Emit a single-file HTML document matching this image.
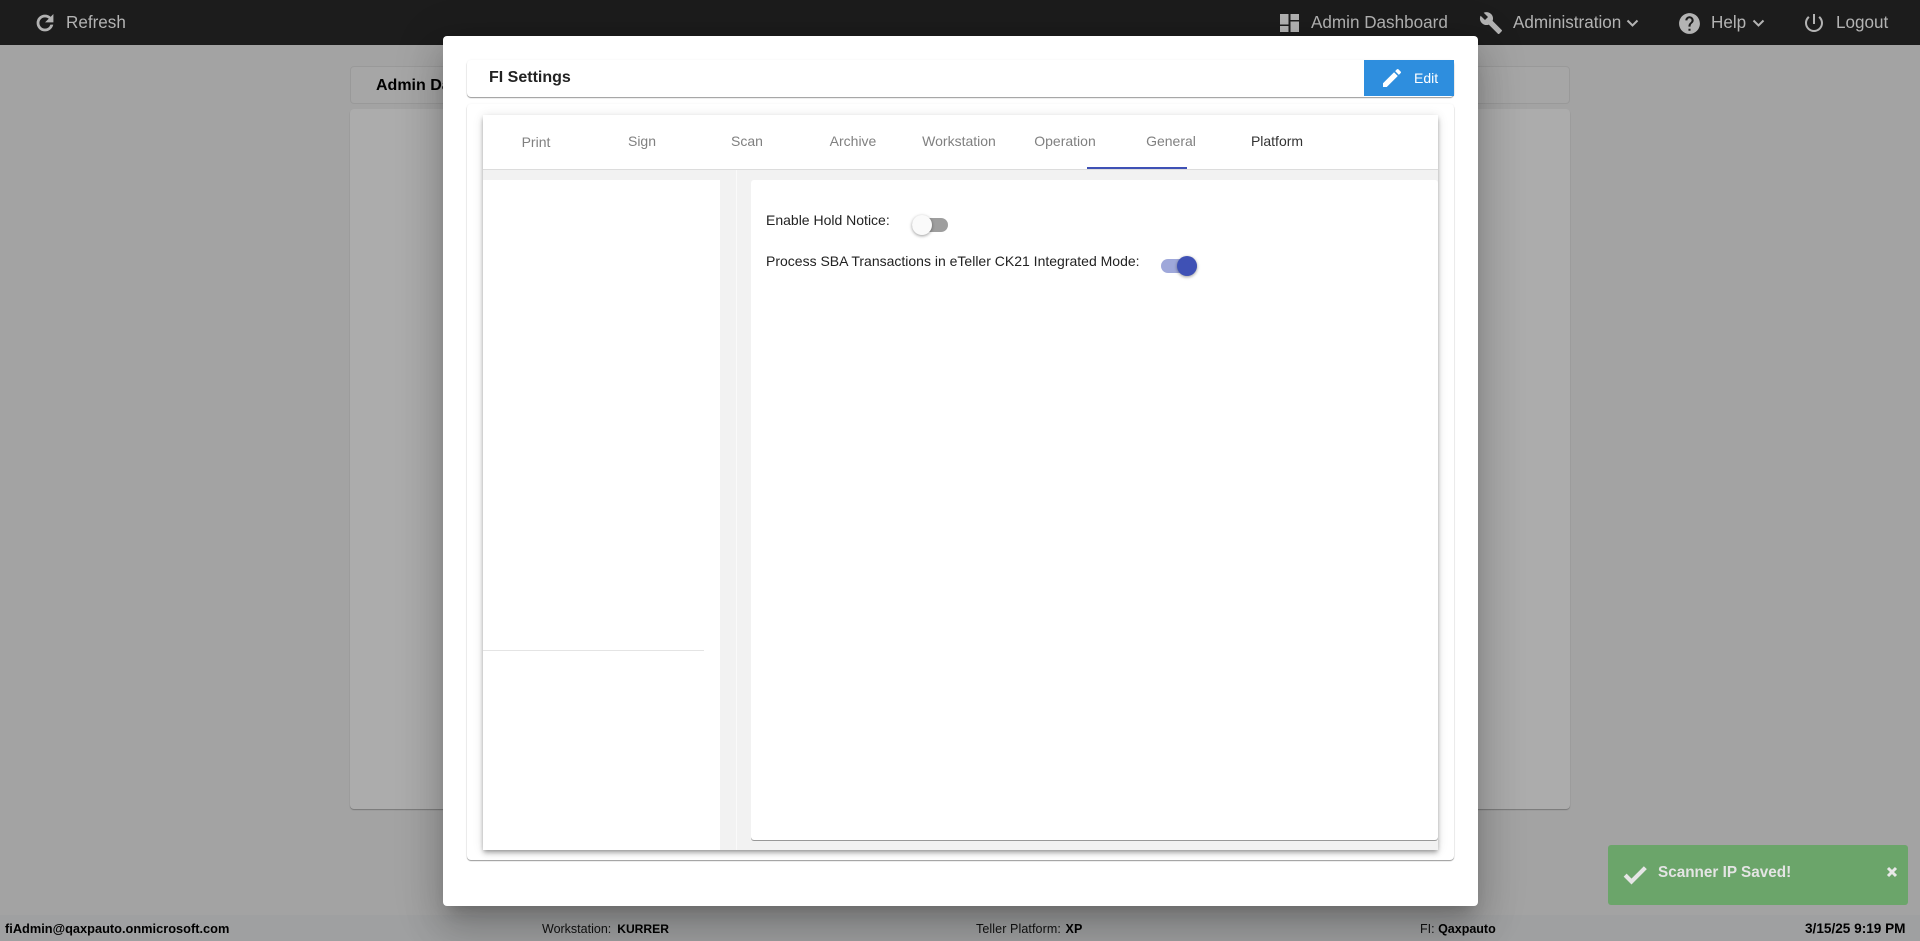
<!DOCTYPE html>
<html><head><meta charset="utf-8"><title>FI Settings</title>
<style>
html,body{margin:0;padding:0;width:1920px;height:941px;overflow:hidden;background:#a3a3a3;font-family:"Liberation Sans",sans-serif}
div,span,svg{position:absolute;box-sizing:border-box}
.t{white-space:nowrap;line-height:20px}
.h{color:#b3b3b3;font-size:17.1px;top:13px}
svg.i{fill:#b3b3b3}
.tab{top:131px;width:106px;text-align:center;font-size:14px;line-height:20px;color:#808080}
.f{top:921px;font-size:12.5px;line-height:16px;color:#111;white-space:nowrap}
.f b{font-weight:700;color:#000}
</style></head><body>
<!-- page behind backdrop -->
<div style="left:350px;top:66px;width:1220px;height:38px;background:#a6a6a6;border:1px solid #999;border-radius:4px"></div>
<div class="t" style="left:376px;top:76px;font-size:16px;font-weight:700;color:#000">Admin Dashboard</div>
<div style="left:350px;top:109px;width:1220px;height:700px;background:#acacac;border-radius:4px;box-shadow:0 1px 1px #777"></div>
<!-- footer -->
<div style="left:0;top:915px;width:1920px;height:26px;background:#9fa0a1"></div>
<div class="f" style="left:5px;font-size:12.8px"><b>fiAdmin@qaxpauto.onmicrosoft.com</b></div>
<div class="f" style="left:542px;word-spacing:1.5px">Workstation: <b style="font-size:12.1px;margin-left:1px">KURRER</b></div>
<div class="f" style="left:976px;letter-spacing:.1px">Teller Platform: <b style="margin-left:1px">XP</b></div>
<div class="f" style="left:1420px">FI: <b>Qaxpauto</b></div>
<div class="f" style="left:1805px;font-size:13.6px"><b>3/15/25 9:19 PM</b></div>
<!-- toast -->
<div style="left:1608px;top:845px;width:300px;height:60px;background:#6ba56a;border-radius:3px"></div>
<svg style="left:1621px;top:861px" width="28" height="28" viewBox="0 0 24 24"><path d="M9 16.17L4.83 12l-1.42 1.41L9 19 21 7l-1.41-1.41z" fill="#e6e6e6" stroke="#e6e6e6" stroke-width="1.6"/></svg>
<div class="t" style="left:1658px;top:863px;font-size:15.3px;font-weight:700;color:#e4e4e4">Scanner IP Saved!</div>
<svg style="left:1886px;top:866px" width="12" height="12" viewBox="0 0 12 12"><path d="M2 2l8 8M10 2l-8 8" stroke="#e8e8e8" stroke-width="3"/></svg>
<!-- header -->
<div style="left:0;top:0;width:1920px;height:45px;background:#1c1c1c"></div>
<svg class="i" style="left:33px;top:11px" width="24" height="24" viewBox="0 0 24 24"><path d="M17.65 6.35C16.2 4.9 14.21 4 12 4c-4.42 0-7.99 3.58-7.99 8s3.57 8 7.99 8c3.73 0 6.84-2.55 7.73-6h-2.08c-.82 2.33-3.04 4-5.65 4-3.31 0-6-2.69-6-6s2.69-6 6-6c1.66 0 3.14.69 4.22 1.78L13 11h7V4l-2.35 2.35z" stroke="#b3b3b3" stroke-width=".8"/></svg>
<div class="t h" style="left:66px">Refresh</div>
<svg class="i" style="left:1280px;top:14px" width="19" height="18" viewBox="0 0 19 18"><path d="M0 0h8.5v10.5H0zM0 12h8.5v6H0zM10.5 0H19v6h-8.5zM10.5 7.5H19V18h-8.5z"/></svg>
<div class="t h" style="left:1311px">Admin Dashboard</div>
<svg class="i" style="left:1479px;top:11px" width="24" height="24" viewBox="0 0 24 24"><path d="M22.7 19l-9.1-9.1c.9-2.3.4-5-1.5-6.9-2-2-5-2.4-7.4-1.3L9 6 6 9 1.6 4.7C.4 7.1.9 10.1 2.9 12.1c1.9 1.9 4.6 2.4 6.9 1.5l9.1 9.1c.4.4 1 .4 1.4 0l2.3-2.3c.5-.4.5-1.1.1-1.4z"/></svg>
<div class="t h" style="left:1513px">Administration</div>
<svg style="left:1626px;top:19px" width="13" height="9" viewBox="0 0 13 9"><path d="M1.5 1.5l5 5 5-5" fill="none" stroke="#b3b3b3" stroke-width="2"/></svg>
<svg class="i" style="left:1677px;top:11px" width="25" height="25" viewBox="0 0 24 24"><path d="M12 2C6.48 2 2 6.48 2 12s4.48 10 10 10 10-4.48 10-10S17.52 2 12 2zm1 17h-2v-2h2v2zm2.07-7.75l-.9.92C13.45 12.9 13 13.5 13 15h-2v-.5c0-1.1.45-2.1 1.17-2.83l1.24-1.26c.37-.36.59-.86.59-1.41 0-1.1-.9-2-2-2s-2 .9-2 2H8c0-2.21 1.79-4 4-4s4 1.79 4 4c0 .88-.36 1.68-.93 2.25z"/></svg>
<div class="t h" style="left:1711px">Help</div>
<svg style="left:1752px;top:19px" width="13" height="9" viewBox="0 0 13 9"><path d="M1.5 1.5l5 5 5-5" fill="none" stroke="#b3b3b3" stroke-width="2"/></svg>
<svg class="i" style="left:1802px;top:11px" width="24" height="24" viewBox="0 0 24 24"><path d="M13 3h-2v10h2V3zm4.83 2.17l-1.42 1.42C17.99 7.86 19 9.81 19 12c0 3.87-3.13 7-7 7s-7-3.13-7-7c0-2.19 1.01-4.14 2.58-5.42L6.17 5.17C4.23 6.82 3 9.26 3 12c0 4.97 4.03 9 9 9s9-4.03 9-9c0-2.74-1.23-5.18-3.17-6.83z"/></svg>
<div class="t h" style="left:1836px">Logout</div>
<!-- modal -->
<div style="left:443px;top:36px;width:1035px;height:870px;background:#fff;border-radius:4px;box-shadow:0 11px 15px -7px rgba(0,0,0,.2),0 24px 38px 3px rgba(0,0,0,.14),0 9px 46px 8px rgba(0,0,0,.12)"></div>
<div style="left:467px;top:60px;width:987px;height:37px;background:#fff;border-radius:4px;box-shadow:0 1px 1px rgba(0,0,0,.4),0 0 2px rgba(0,0,0,.05)"></div>
<div class="t" style="left:489px;top:68px;font-size:16px;font-weight:700;color:#222">FI Settings</div>
<div style="left:1364px;top:60px;width:90px;height:36px;background:#2e8ede"></div>
<svg style="left:1380px;top:66px" width="24" height="24" viewBox="0 0 24 24" fill="#fff"><path d="M3 17.25V21h3.75L17.81 9.94l-3.75-3.75L3 17.25zM20.71 7.04c.39-.39.39-1.02 0-1.41l-2.34-2.34c-.39-.39-1.02-.39-1.41 0l-1.83 1.83 3.75 3.75 1.83-1.83z"/></svg>
<div class="t" style="left:1414px;top:68px;font-size:14px;color:#fff">Edit</div>
<div style="left:467px;top:104px;width:987px;height:756px;background:#fff;border-radius:4px;box-shadow:0 1px 1px rgba(0,0,0,.4),0 0 2px rgba(0,0,0,.05)"></div>
<div style="left:483px;top:115px;width:955px;height:735px;background:#f2f2f2;box-shadow:0 2px 4px -1px rgba(0,0,0,.3),0 4px 5px rgba(0,0,0,.14),0 1px 10px rgba(0,0,0,.12)"></div>
<div style="left:483px;top:115px;width:955px;height:55px;background:#fff;border-bottom:1px solid #dcdcdc"></div>
<div class="tab" style="left:483px;top:132px">Print</div>
<div class="tab" style="left:589px">Sign</div>
<div class="tab" style="left:694px">Scan</div>
<div class="tab" style="left:800px">Archive</div>
<div class="tab" style="left:906px">Workstation</div>
<div class="tab" style="left:1012px">Operation</div>
<div class="tab" style="left:1118px">General</div>
<div class="tab" style="left:1224px;color:#333">Platform</div>
<div style="left:1087px;top:167px;width:100px;height:2px;background:#3f51b5"></div>
<div style="left:483px;top:180px;width:237px;height:670px;background:#fff"></div>
<div style="left:483px;top:650px;width:221px;height:1px;background:#e4e4e4"></div>
<div style="left:736px;top:170px;width:1px;height:680px;background:#fafafa"></div>
<div style="left:751px;top:180px;width:687px;height:660px;background:#fff;border-radius:3px;box-shadow:0 1px 0 #999"></div>
<div class="t" style="left:766px;top:210px;font-size:14px;color:#222">Enable Hold Notice:</div>
<div style="left:912px;top:218px;width:36px;height:14px;border-radius:7px;background:#9e9e9e"></div>
<div style="left:912px;top:215px;width:20px;height:20px;border-radius:50%;background:#fafafa;box-shadow:0 1px 3px rgba(0,0,0,.4)"></div>
<div class="t" style="left:766px;top:251px;font-size:14px;color:#222">Process SBA Transactions in eTeller CK21 Integrated Mode:</div>
<div style="left:1161px;top:259px;width:36px;height:14px;border-radius:7px;background:#9fa8da"></div>
<div style="left:1177px;top:256px;width:20px;height:20px;border-radius:50%;background:#3f51b5;box-shadow:0 1px 3px rgba(0,0,0,.4)"></div>
</body></html>
